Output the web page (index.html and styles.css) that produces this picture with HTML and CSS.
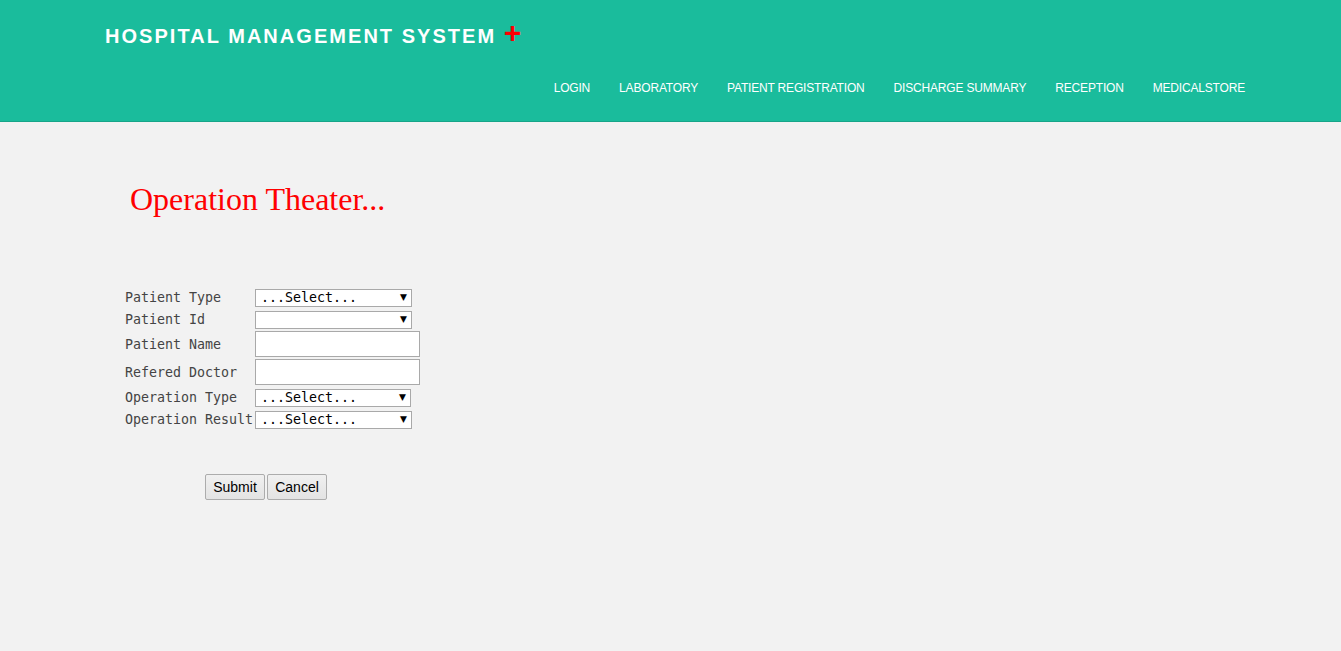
FILE: index.html
```html
<!DOCTYPE html>
<html>
<head>
<meta charset="utf-8">
<title>Operation Theater</title>
<link rel="stylesheet" href="styles.css">
</head>
<body>
<header class="header">
  <div class="brand">HOSPITAL MANAGEMENT SYSTEM <span class="plus">+</span></div>
  <nav class="nav">
    <a href="#">LOGIN</a>
    <a href="#">LABORATORY</a>
    <a href="#">PATIENT REGISTRATION</a>
    <a href="#">DISCHARGE SUMMARY</a>
    <a href="#">RECEPTION</a>
    <a href="#">MEDICALSTORE</a>
  </nav>
</header>
<main class="main">
  <h2 class="page-title">Operation Theater...</h2>
  <form class="form">
    <label class="lbl">Patient Type</label>
    <div class="sel"><select><option>...Select...</option></select><span class="arrow">&#9660;</span></div>
    <label class="lbl">Patient Id</label>
    <div class="sel"><select><option></option></select><span class="arrow">&#9660;</span></div>
    <label class="lbl">Patient Name</label>
    <div class="field"><input class="txt" type="text"></div>
    <label class="lbl">Refered Doctor</label>
    <div class="field"><input class="txt" type="text"></div>
    <label class="lbl">Operation Type</label>
    <div class="sel sel-narrow"><select><option>...Select...</option></select><span class="arrow">&#9660;</span></div>
    <label class="lbl">Operation Result</label>
    <div class="sel"><select><option>...Select...</option></select><span class="arrow">&#9660;</span></div>
  </form>
  <div class="buttons">
    <button class="btn" type="button">Submit</button>
    <button class="btn" type="button">Cancel</button>
  </div>
</main>
</body>
</html>
```
FILE: styles.css
```css
html, body {
  margin: 0;
  padding: 0;
  background: #f2f2f2;
}
.header {
  background: #1abc9c;
  border-bottom: 1px solid #17a589;
  height: 121px;
  box-sizing: content-box;
}
.brand {
  padding: 24px 0 0 105px;
  font-family: "Liberation Sans", Arial, sans-serif;
  font-weight: bold;
  font-size: 20px;
  letter-spacing: 2.04px;
  line-height: 24px;
  color: #ffffff;
  height: 30px;
}
.brand .plus {
  color: #ff0000;
  font-size: 30px;
  line-height: 24px;
  vertical-align: top;
  position: relative;
  top: -3px;
  left: 0;
  letter-spacing: 0;
}
.nav {
  display: flex;
  justify-content: flex-end;
  padding-right: 81.5px;
  margin-top: 26px;
}
.nav a {
  padding: 0 14.5px;
  font-family: "Liberation Sans", Arial, sans-serif;
  font-size: 12px;
  letter-spacing: -0.18px;
  line-height: 16px;
  color: #ffffff;
  text-decoration: none;
}
.main {
  padding: 57px 0 0 125px;
}
.page-title {
  margin: 0 0 0 5px;
  font-family: "Liberation Serif", "Times New Roman", serif;
  font-weight: normal;
  font-size: 32px;
  line-height: 40px;
  color: #ff0000;
}
.form {
  margin-top: 67px;
  display: grid;
  grid-template-columns: 130px auto;
  grid-template-rows: 22px 22px 28px 28px 22px 22px;
  align-items: start;
  justify-items: start;
}
.lbl {
  align-self: center;
  font-family: "DejaVu Sans Mono", Consolas, monospace;
  font-size: 13.3px;
  color: #444444;
  white-space: nowrap;
}
.sel {
  position: relative;
  margin-top: 2px;
  width: 157px;
  height: 18px;
}
.sel-narrow {
  width: 156px;
}
.sel select {
  appearance: none;
  -webkit-appearance: none;
  box-sizing: border-box;
  width: 100%;
  height: 18px;
  margin: 0;
  padding: 0 0 0 5px;
  border: 1px solid #a9a9a9;
  background: #ffffff;
  font-family: "DejaVu Sans Mono", Consolas, monospace;
  font-size: 13.3px;
  line-height: 16px;
  color: #000000;
  border-radius: 0;
}
.sel .arrow {
  position: absolute;
  right: 5px;
  top: 3px;
  font-family: "DejaVu Sans", sans-serif;
  font-size: 9px;
  line-height: 12px;
  color: #000000;
  pointer-events: none;
}
.field {
  margin-top: 1px;
}
.txt {
  box-sizing: border-box;
  width: 165px;
  height: 26px;
  margin: 0;
  border: 1px solid #a9a9a9;
  background: #ffffff;
  padding: 2px 4px;
  display: block;
}
.buttons {
  margin: 44px 0 0 80px;
  display: flex;
  gap: 2px;
}
.btn {
  box-sizing: border-box;
  width: 60px;
  height: 26px;
  margin: 0;
  padding: 0;
  border: 1px solid #acacac;
  border-radius: 2px;
  background: linear-gradient(#f0f0f0, #e3e3e3);
  font-family: "Liberation Sans", Arial, sans-serif;
  font-size: 14px;
  color: #000000;
}
```
